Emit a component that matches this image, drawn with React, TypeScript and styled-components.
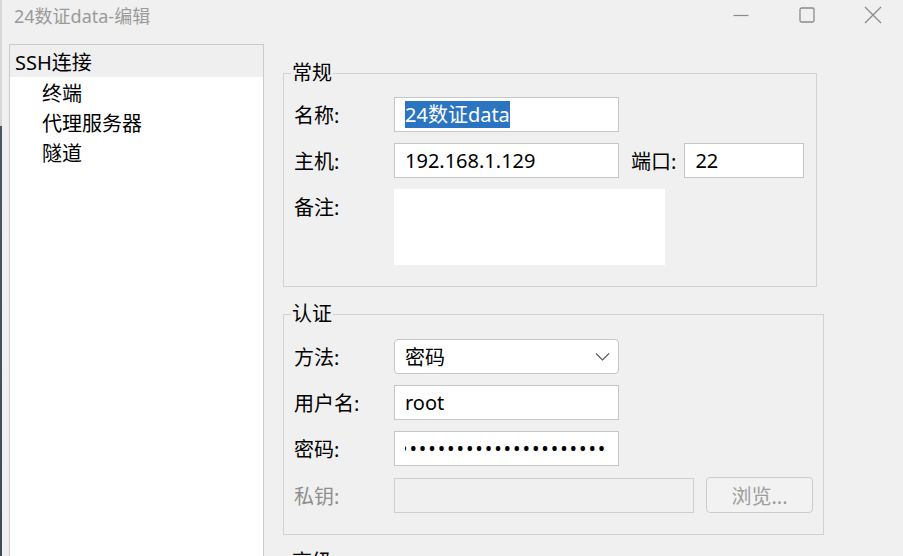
import React from 'react';
import styled, {createGlobalStyle} from 'styled-components';

const GlobalStyle = createGlobalStyle`
  html, body {
    margin: 0;
    padding: 0;
    background: #f0f0f0;
    overflow: hidden;
  }
  body {
    font-family: "Noto Sans", "Noto Sans CJK SC", sans-serif;
    color: #000;
  }
  * {
    box-sizing: border-box;
  }
`

const Window = styled.div`
    width: 903px;
    height: 556px;
    display: flex;
    background: #f0f0f0;
    overflow: hidden;
`

const EdgeStrip = styled.div`
    width: 2px;
    flex-shrink: 0;
    background: linear-gradient(#d6d6d6 0, #d6d6d6 126px, #4b5660 126px, #3f4a54 100%);
`

const Main = styled.div`
    flex: 1;
    display: flex;
    flex-direction: column;
    min-width: 0;
`

const TitleBar = styled.div`
    height: 44px;
    display: flex;
    align-items: flex-start;
    flex-shrink: 0;
`

const Title = styled.span`
    padding-left: 12px;
    line-height: 32px;
    font-size: 18px;
    color: #9a9a9a;
`

const Controls = styled.div`
    margin-left: auto;
    margin-right: -3px;
    display: flex;
`

const ControlButton = styled.div`
    width: 66px;
    height: 30px;
    display: flex;
    align-items: center;
    justify-content: center;
    color: #8a8a8a;
`

const Body = styled.div`
    flex: 1;
    display: flex;
    padding-left: 7px;
    overflow: hidden;
`

const Tree = styled.div`
    width: 255px;
    height: 540px;
    flex-shrink: 0;
    background: #fff;
    border: 1px solid #cacaca;
    font-size: 20px;
`

const TreeItem = styled.div<{$level: number; $selected?: boolean}>`
    height: ${p => p.$selected ? 32 : 30}px;
    line-height: ${p => p.$selected ? 29 : 30}px;
    padding-top: ${p => p.$selected ? 3 : 0}px;
    padding-left: ${p => p.$level ? 32 : 5}px;
    margin-bottom: ${p => p.$selected ? 2 : 0}px;
    background: ${p => p.$selected ? '#efefef' : 'transparent'};
    white-space: nowrap;
`

const Content = styled.div`
    display: flex;
    flex-direction: column;
    gap: 13px;
    padding-top: 15px;
    margin-left: 19px;
`

const Group = styled.fieldset<{$w: number; $pt?: number}>`
    width: ${p => p.$w}px;
    margin: 0;
    min-width: 0;
    border: 1px solid #d2d2d2;
    padding: ${p => p.$pt || 10}px 10px 21px 10px;
`

const Legend = styled.legend`
    font-size: 20px;
    line-height: 28px;
    padding: 0 1px;
    margin-left: -3px;
`

const Row = styled.div<{$gap?: number}>`
    display: flex;
    align-items: flex-start;
    &:not(:first-of-type) {
      margin-top: ${p => p.$gap || 11}px;
    }
`

const Label = styled.div<{$disabled?: boolean}>`
    width: 100px;
    flex-shrink: 0;
    height: 35px;
    line-height: 37px;
    font-size: 20px;
    color: ${p => p.$disabled ? '#8e8e8e' : '#000'};
`

const InlineLabel = styled(Label)`
    width: auto;
    margin: 0 8px 0 12px;
`

const Field = styled.div<{$w: number; $h?: number; $bare?: boolean; $disabled?: boolean; $round?: boolean}>`
    width: ${p => p.$w}px;
    height: ${p => p.$h || 35}px;
    flex-shrink: 0;
    display: flex;
    align-items: center;
    padding: 0 10px;
    font-size: 20px;
    background: ${p => p.$disabled ? '#f0f0f0' : '#fff'};
    border: 1px solid ${p => p.$bare ? '#fff' : p.$disabled ? '#cfcfcf' : '#c6c6c6'};
    border-radius: ${p => p.$round ? 4 : 0}px;
    white-space: nowrap;
`

const Selected = styled.span`
    background: #2b74c1;
    color: #fff;
    line-height: 27px;
`

const Chevron = styled.svg`
    margin-left: auto;
    margin-right: -2px;
`

const DotsClip = styled.div`
    flex: 1;
    overflow: hidden;
`

const Dots = styled.div`
    margin-left: -5px;
    font-size: 20px;
    letter-spacing: 1.9px;
    white-space: nowrap;
`

const BrowseButton = styled.div`
    width: 107px;
    height: 36px;
    margin-left: 12px;
    margin-top: -1px;
    border: 1px solid #cbcbcb;
    border-radius: 4px;
    background: #f2f2f2;
    display: flex;
    align-items: center;
    justify-content: center;
    font-size: 20px;
    color: #9c9c9c;
`

const App = () => {
    return (
        <Window>
            <GlobalStyle/>
            <EdgeStrip/>
            <Main>
                <TitleBar>
                    <Title>24数证data-编辑</Title>
                    <Controls>
                        <ControlButton>
                            <svg width="16" height="16" viewBox="0 0 16 16">
                                <path d="M0.5 8.5h15" stroke="currentColor" strokeWidth="1.2" fill="none"/>
                            </svg>
                        </ControlButton>
                        <ControlButton>
                            <svg width="16" height="16" viewBox="0 0 16 16">
                                <rect x="1" y="1" width="14" height="14" rx="1.5" stroke="currentColor" strokeWidth="1.3" fill="none"/>
                            </svg>
                        </ControlButton>
                        <ControlButton>
                            <svg width="18" height="18" viewBox="0 0 18 18">
                                <path d="M1 1L17 17M17 1L1 17" stroke="currentColor" strokeWidth="1.3" fill="none"/>
                            </svg>
                        </ControlButton>
                    </Controls>
                </TitleBar>
                <Body>
                    <Tree>
                        <TreeItem $level={0} $selected>SSH连接</TreeItem>
                        <TreeItem $level={1}>终端</TreeItem>
                        <TreeItem $level={1}>代理服务器</TreeItem>
                        <TreeItem $level={1}>隧道</TreeItem>
                    </Tree>
                    <Content>
                        <Group $w={534}>
                            <Legend>常规</Legend>
                            <Row>
                                <Label>名称:</Label>
                                <Field $w={225}><Selected>24数证data</Selected></Field>
                            </Row>
                            <Row>
                                <Label>主机:</Label>
                                <Field $w={225}>192.168.1.129</Field>
                                <InlineLabel>端口:</InlineLabel>
                                <Field $w={120}>22</Field>
                            </Row>
                            <Row>
                                <Label>备注:</Label>
                                <Field $w={271} $h={76} $bare/>
                            </Row>
                        </Group>
                        <Group $w={541} $pt={11}>
                            <Legend>认证</Legend>
                            <Row>
                                <Label>方法:</Label>
                                <Field $w={225} $round>
                                    密码
                                    <Chevron width="15" height="10" viewBox="0 0 15 10">
                                        <path d="M1 1.5L7.5 8L14 1.5" stroke="#5a5a5a" strokeWidth="1.2" fill="none"/>
                                    </Chevron>
                                </Field>
                            </Row>
                            <Row>
                                <Label>用户名:</Label>
                                <Field $w={225}>root</Field>
                            </Row>
                            <Row>
                                <Label>密码:</Label>
                                <Field $w={225}>
                                    <DotsClip>
                                        <Dots>{'•'.repeat(24)}</Dots>
                                    </DotsClip>
                                </Field>
                            </Row>
                            <Row $gap={12}>
                                <Label $disabled>私钥:</Label>
                                <Field $w={300} $disabled/>
                                <BrowseButton>浏览...</BrowseButton>
                            </Row>
                        </Group>
                        <Group $w={541}>
                            <Legend>高级</Legend>
                        </Group>
                    </Content>
                </Body>
            </Main>
        </Window>
    );
};

export default App;
